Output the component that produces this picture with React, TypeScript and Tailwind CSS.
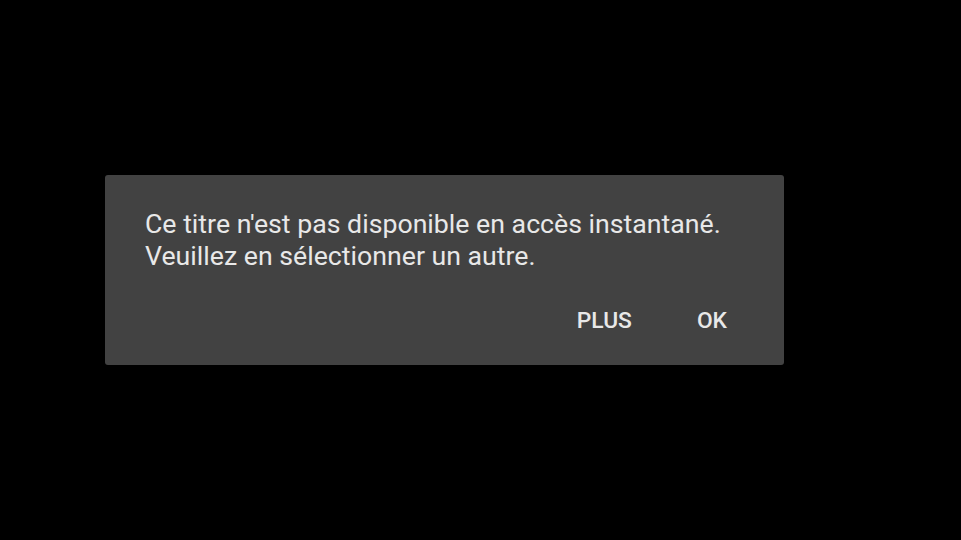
export default function App() {
  return (
    <main className="w-[961px] h-[540px] bg-black flex items-center pl-[105px] font-['Roboto',sans-serif]">
      <div className="w-[679px] h-[190px] rounded-[3px] bg-[#424242] pt-[33px] pl-[40px] pr-[57px] flex flex-col">
        <p className="text-[26.7px] leading-[32px] text-[#e8e8e8] whitespace-nowrap">
          Ce titre n'est pas disponible en accès instantané.
          <br />
          Veuillez en sélectionner un autre.
        </p>
        <div className="flex justify-end gap-[65px] mt-[33px]">
          <button className="text-[22.8px] leading-[32px] font-medium text-[#e8e8e8]">PLUS</button>
          <button className="text-[22.8px] leading-[32px] font-medium text-[#e8e8e8]">OK</button>
        </div>
      </div>
    </main>
  );
}
